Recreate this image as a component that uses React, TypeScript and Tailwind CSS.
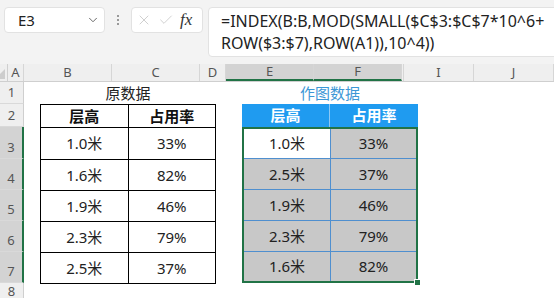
import React from 'react';
import { ChevronDown, X, Check } from 'lucide-react';

const font = { fontFamily: '"Noto Sans", "Noto Sans CJK SC", sans-serif' };

const cols = ['A', 'B', 'C', 'D', 'E', 'F', '', 'I', 'J'];
const colWidths = ['w-[16px]', 'w-[88px]', 'w-[88px]', 'w-[26px]', 'w-[88px]', 'w-[88px]', 'w-[2px]', 'w-[70px]', 'w-[80px]'];

const rowHeights = ['h-[22px]', 'h-[23px]', 'h-[32px]', 'h-[31px]', 'h-[31px]', 'h-[31px]', 'h-[31px]', 'h-[20px]'];

const source = [
  ['1.0米', '33%'],
  ['1.6米', '82%'],
  ['1.9米', '46%'],
  ['2.3米', '79%'],
  ['2.5米', '37%'],
];

const chart = [
  ['1.0米', '33%'],
  ['2.5米', '37%'],
  ['1.9米', '46%'],
  ['2.3米', '79%'],
  ['1.6米', '82%'],
];

const FormulaBar = () => (
  <div className="h-[64px] bg-[#f3f3f3] flex items-start pt-[7px] pl-[4px] gap-[5px] overflow-hidden">
    <div className="w-[101px] h-[26px] bg-white rounded-[4px] border border-[#e2e2e2] flex items-center justify-between pl-[13px] pr-[4px]">
      <span className="text-[15px] text-[#222]">E3</span>
      <ChevronDown size={14} strokeWidth={1.5} className="text-[#555]" />
    </div>
    <div className="w-[16px] h-[26px] flex flex-col items-center justify-center gap-[2px]">
      <span className="w-[2px] h-[2px] bg-[#999]" />
      <span className="w-[2px] h-[2px] bg-[#999]" />
      <span className="w-[2px] h-[2px] bg-[#999]" />
    </div>
    <div className="w-[72px] h-[26px] bg-white rounded-[4px] border border-[#e2e2e2] flex items-center pl-[4px] gap-[6px]">
      <X size={16} strokeWidth={1.2} className="text-[#c4c4c4]" />
      <Check size={16} strokeWidth={1.2} className="text-[#c4c4c4]" />
      <span className="text-[17px] italic text-[#333]" style={{ fontFamily: '"Liberation Serif", serif' }}>
        fx
      </span>
    </div>
    <div className="flex-1 h-[50px] bg-white rounded-[4px] border border-[#e2e2e2] -mr-[10px] pl-[12px] pt-[2px] text-[16px] leading-[22px] text-[#222]">
      <div>=INDEX(B:B,MOD(SMALL($C$3:$C$7*10^6+</div>
      <div>ROW($3:$7),ROW(A1)),10^4))</div>
    </div>
  </div>
);

const ColumnHeaders = () => (
  <div className="flex h-[18px] bg-[#efefef] border-b border-[#cfcfcf]">
    <div className="w-[24px] h-full relative border-r border-[#cfcfcf]">
      <div className="absolute right-[2px] bottom-[2px] w-0 h-0 border-l-[10px] border-l-transparent border-b-[10px] border-b-[#cdcdcd]" />
    </div>
    {cols.map((c, i) => {
      const sel = c === 'E' || c === 'F';
      return (
        <div
          key={i}
          className={`${colWidths[i]} shrink-0 h-full flex items-center justify-center text-[13px] text-[#555] border-r border-[#d6d6d6] ${
            sel ? 'bg-[#d3d3d3] border-b-2 border-b-[#217346] text-[#333]' : ''
          }`}
        >
          {c}
        </div>
      );
    })}
  </div>
);

const RowHeaders = () => (
  <div className="w-[24px] flex flex-col shrink-0">
    {rowHeights.map((h, i) => {
      const sel = i >= 2 && i <= 6;
      return (
        <div
          key={i}
          className={`${h} flex items-end justify-center pb-[1px] text-[13px] text-[#555] border-b border-[#d9d9d9] ${
            sel ? 'bg-[#d3d3d3] border-r-2 border-r-[#217346]' : 'bg-[#efefef] border-r border-r-[#cfcfcf]'
          }`}
        >
          {i + 1}
        </div>
      );
    })}
  </div>
);

const SourceTable = () => (
  <div className="flex flex-col border-l border-t border-black">
    <div className="flex h-[23px]">
      <div className="w-[88px] border-r border-b border-black flex items-center justify-center font-bold text-[15px]">层高</div>
      <div className="w-[88px] border-r border-b border-black flex items-center justify-center font-bold text-[15px]">占用率</div>
    </div>
    {source.map((r, i) => (
      <div key={i} className={`flex ${i === 0 ? 'h-[32px]' : 'h-[31px]'}`}>
        <div className="w-[88px] border-r border-b border-black flex items-center justify-center text-[15px] text-[#222]">{r[0]}</div>
        <div className="w-[88px] border-r border-b border-black flex items-center justify-center text-[15px] text-[#222]">{r[1]}</div>
      </div>
    ))}
  </div>
);

const ChartTable = () => (
  <div className="flex flex-col">
    <div className="flex h-[23px] bg-[#1f9bf0] text-white">
      <div className="w-[88px] border-r border-[#8cc8f5] flex items-center justify-center font-bold text-[15px]">层高</div>
      <div className="w-[88px] flex items-center justify-center font-bold text-[15px]">占用率</div>
    </div>
    <div className="relative border-2 border-[#217346] w-[176px]">
      {chart.map((r, i) => (
        <div key={i} className={`flex ${i === 0 ? 'h-[30px]' : i === 4 ? 'h-[29px]' : 'h-[31px]'} ${i < 4 ? 'border-b border-[#4f8fcf]' : ''}`}>
          <div
            className={`w-[87px] border-r border-[#4f8fcf] flex items-center justify-center text-[15px] text-[#222] ${
              i === 0 ? 'bg-white' : 'bg-[#c8c8c8]'
            }`}
          >
            {r[0]}
          </div>
          <div className="flex-1 bg-[#c8c8c8] flex items-center justify-center text-[15px] text-[#222]">{r[1]}</div>
        </div>
      ))}
      <div className="absolute -right-[5px] -bottom-[5px] w-[7px] h-[7px] bg-[#217346] border border-white" />
    </div>
  </div>
);

export default function App() {
  return (
    <div className="w-[554px] h-[298px] overflow-hidden bg-white text-[#111]" style={font}>
      <FormulaBar />
      <ColumnHeaders />
      <div className="flex">
        <RowHeaders />
        <div className="w-[16px] shrink-0" />
        <div className="w-[176px] shrink-0 flex flex-col">
          <div className="h-[22px] flex items-center justify-center text-[15px] text-[#222]">原数据</div>
          <SourceTable />
        </div>
        <div className="w-[26px] shrink-0" />
        <div className="w-[176px] shrink-0 flex flex-col">
          <div className="h-[22px] flex items-center justify-center text-[15px] text-[#3d97d6]">作图数据</div>
          <ChartTable />
        </div>
      </div>
    </div>
  );
}
